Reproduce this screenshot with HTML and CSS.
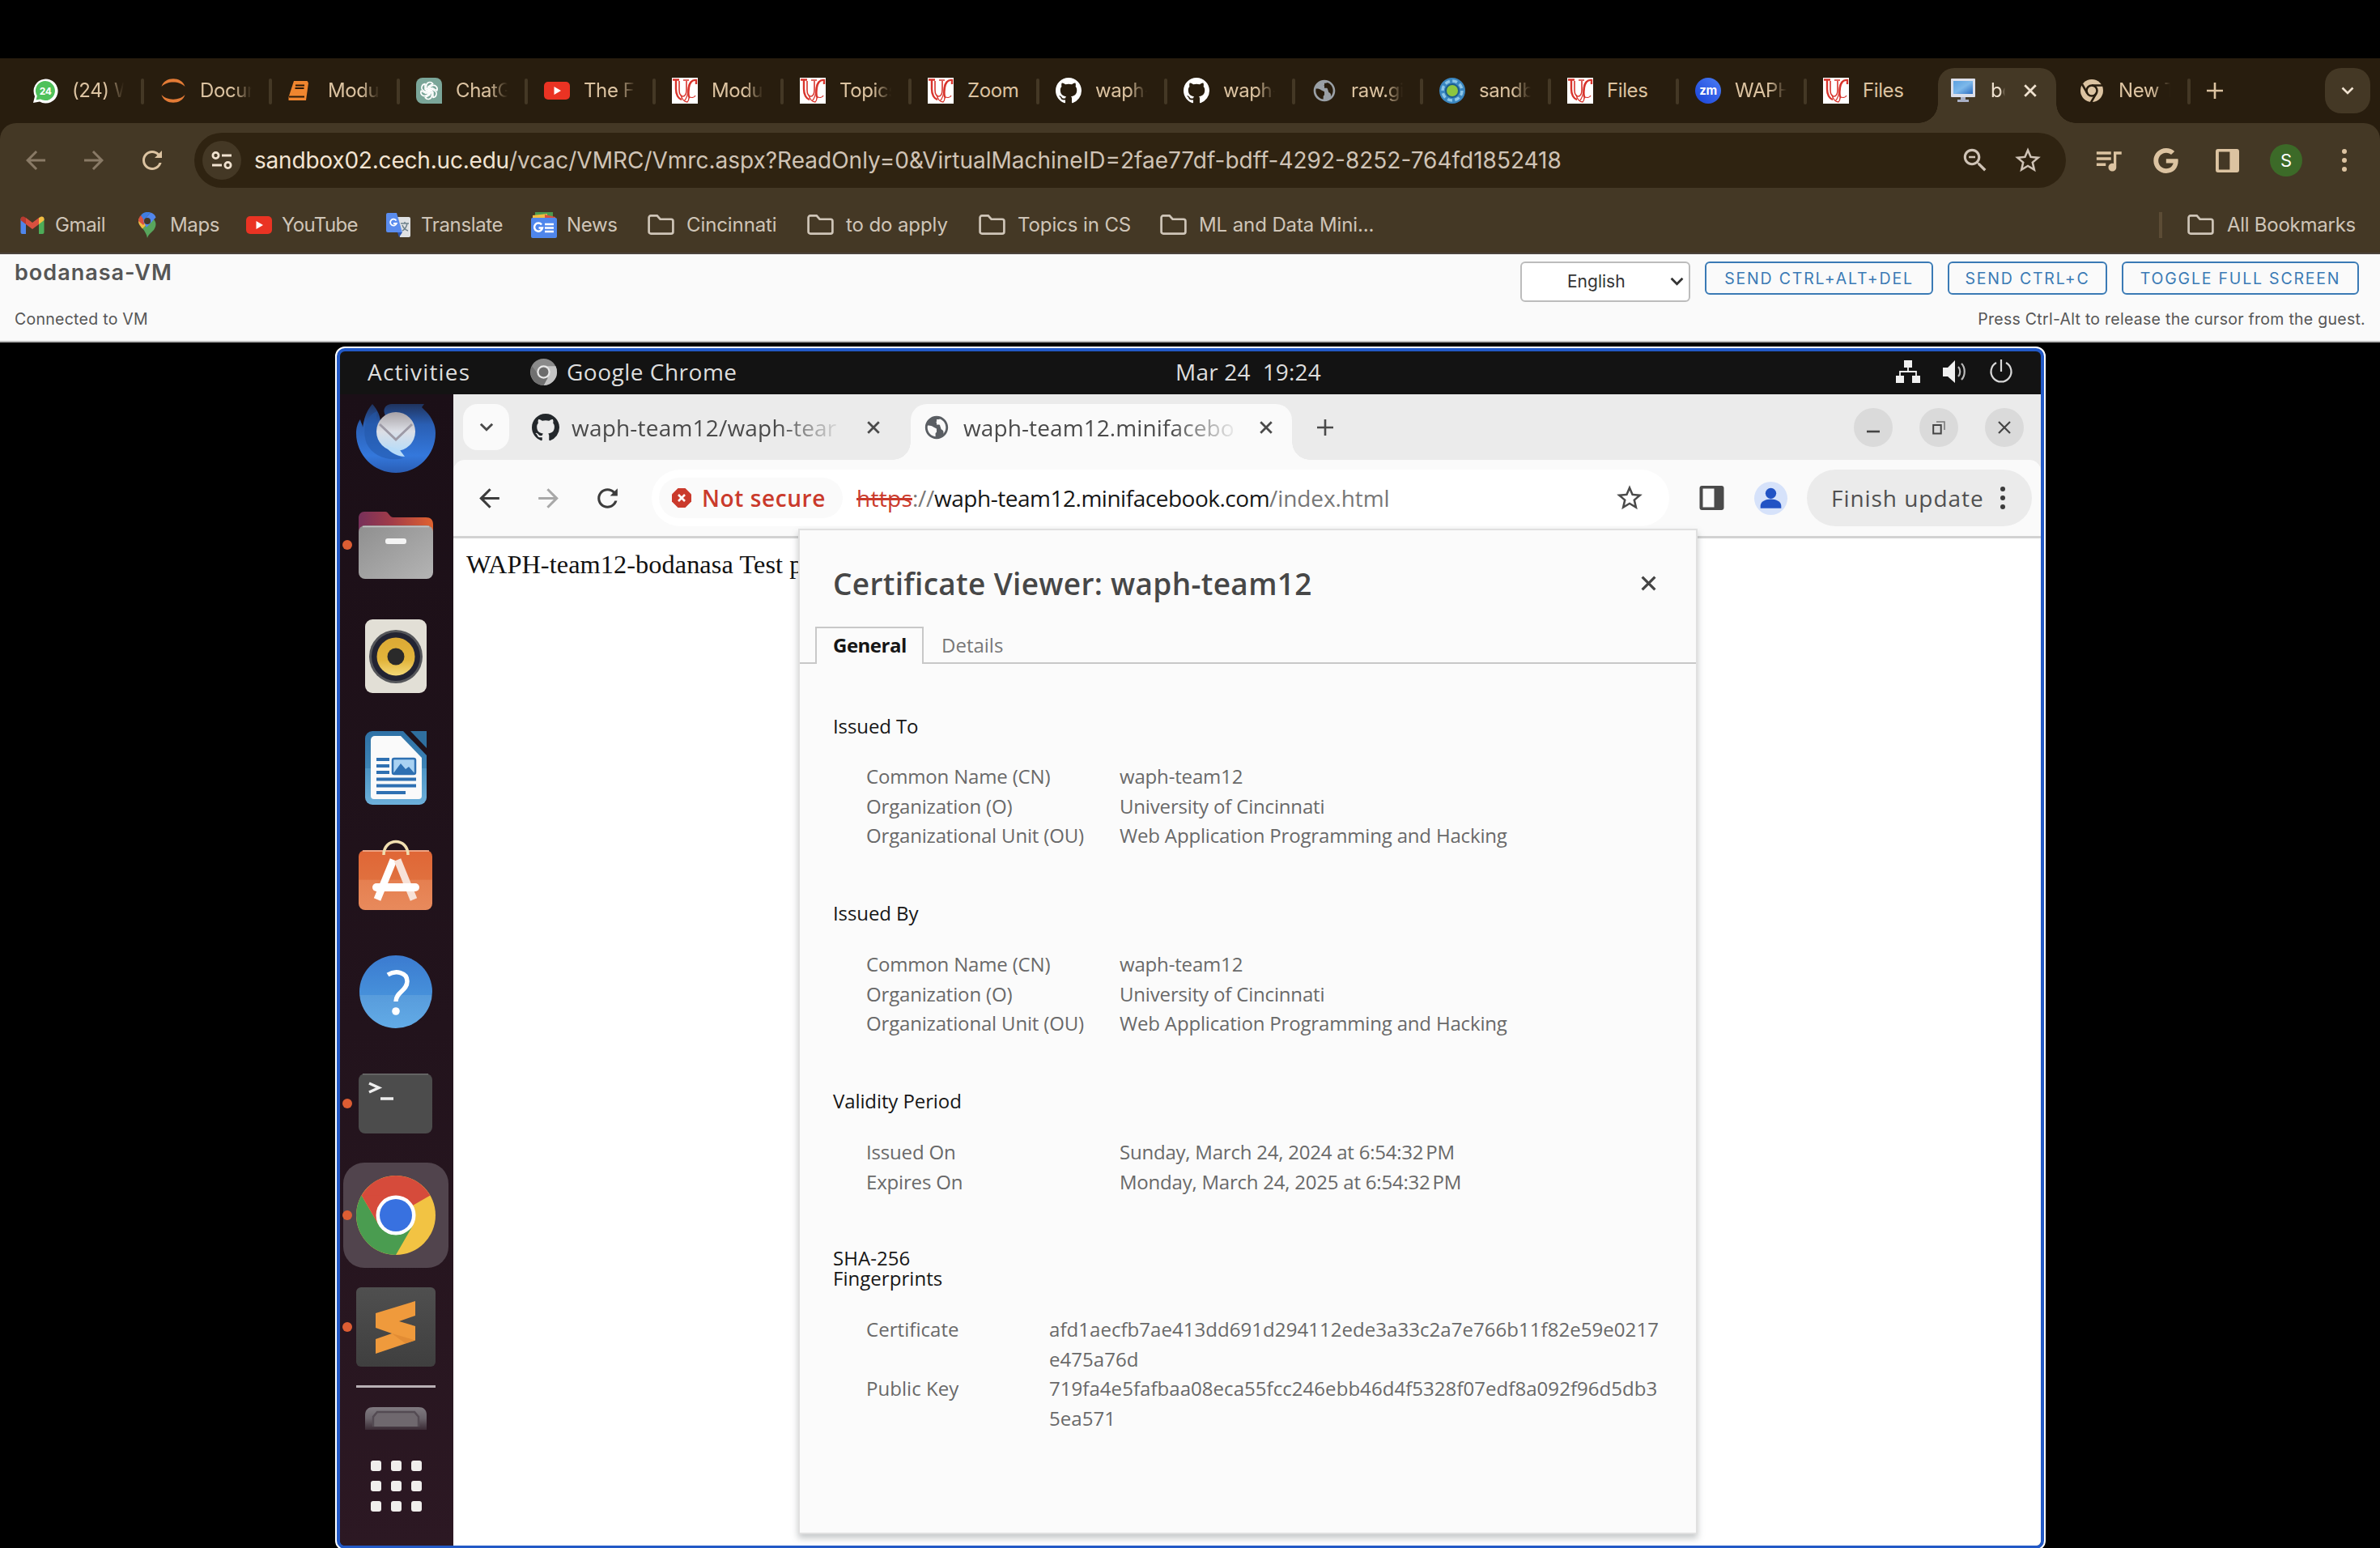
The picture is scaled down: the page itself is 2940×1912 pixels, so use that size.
FILE: index.html
```html
<!DOCTYPE html>
<html lang="en">
<head>
<meta charset="utf-8">
<title>bodanasa-VM</title>
<link rel="stylesheet" href="styles.css">
</head>
<body>
<svg class="defs" width="0" height="0">
  <defs>
    <linearGradient id="gZoom" x1="1" y1="0" x2="0" y2="1"><stop offset="0" stop-color="#4a7df5"/><stop offset="1" stop-color="#1a43d8"/></linearGradient>
    <linearGradient id="gScreen" x1="0" y1="0" x2="1" y2="1"><stop offset="0" stop-color="#5ca0e0"/><stop offset=".5" stop-color="#7db8ea"/><stop offset="1" stop-color="#2c6cc0"/></linearGradient>
    <linearGradient id="gBird" x1="0" y1="0" x2="0" y2="1"><stop offset="0" stop-color="#1f335e"/><stop offset=".3" stop-color="#2a5fb4"/><stop offset=".75" stop-color="#3478dc"/><stop offset="1" stop-color="#2a5db4"/></linearGradient>
    <linearGradient id="gMail" x1="0" y1="0" x2="0" y2="1"><stop offset="0" stop-color="#a8a2a6"/><stop offset=".5" stop-color="#dcdfe6"/><stop offset="1" stop-color="#b8dcf8"/></linearGradient>
    <linearGradient id="gFolder" x1="0" y1="0" x2="1" y2="0"><stop offset="0" stop-color="#77305a"/><stop offset=".45" stop-color="#a23c48"/><stop offset="1" stop-color="#e0622f"/></linearGradient>
    <linearGradient id="gGrey" x1="0" y1="0" x2="1" y2="1"><stop offset="0" stop-color="#8f8f8f"/><stop offset="1" stop-color="#b4b4b4"/></linearGradient>
    <linearGradient id="gSpk" x1="0" y1="0" x2="0" y2="1"><stop offset="0" stop-color="#dca934"/><stop offset=".6" stop-color="#e2b53c"/><stop offset="1" stop-color="#f4d977"/></linearGradient>
    <linearGradient id="gDoc" x1="0" y1="0" x2="0" y2="1"><stop offset="0" stop-color="#2e71a5"/><stop offset=".5" stop-color="#3d84b6"/><stop offset=".5" stop-color="#4c94c4"/><stop offset="1" stop-color="#6db0da"/></linearGradient>
    <linearGradient id="gBag" x1="0" y1="0" x2="0" y2="1"><stop offset="0" stop-color="#e06636"/><stop offset=".49" stop-color="#e0703e"/><stop offset=".5" stop-color="#e57f50"/><stop offset="1" stop-color="#e88a5c"/></linearGradient>
    <linearGradient id="gHelp" x1="0" y1="0" x2="0" y2="1"><stop offset="0" stop-color="#3b7bd0"/><stop offset=".54" stop-color="#4690da"/><stop offset=".55" stop-color="#589cdc"/><stop offset="1" stop-color="#62abe6"/></linearGradient>
    <linearGradient id="gTile" x1="0" y1="0" x2="0" y2="1"><stop offset="0" stop-color="#4f4f4f"/><stop offset="1" stop-color="#3f3f3f"/></linearGradient>
    <linearGradient id="gTrash" x1="0" y1="0" x2="0" y2="1"><stop offset="0" stop-color="#807a80"/><stop offset=".5" stop-color="#6a636a"/><stop offset="1" stop-color="#3a2a34"/></linearGradient>
  </defs>
  <symbol id="whatsapp" viewBox="0 0 32 32"><path d="M1 31l2-8A15 15 0 1 1 9 29.5z" fill="#fff"/><path d="M4.500 27.500l1.300-5A12 12 0 1 1 10 26.500z" fill="#4fc15b"/><text x="16" y="20.500" class="badge24">24</text></symbol>
  <symbol id="jupyter" viewBox="0 0 32 32"><path d="M1.500 11C5-2 27-2 30.500 11 24 3.500 8 3.500 1.500 11zM1.500 21C5 34 27 34 30.500 21 24 28.500 8 28.500 1.500 21z" fill="#e37b36"/></symbol>
  <symbol id="book" viewBox="0 0 32 32"><path d="M9 4h16.500L27 6.500 24 28H2.500V24z" fill="#f0862f"/><path d="M11 9.500h11M10.500 13h11M3 23.500h19" stroke="#2b1a0a" stroke-width="1.800"/></symbol>
  <symbol id="openai" viewBox="0 0 32 32"><path d="M8 0h16a8 8 0 0 1 8 8v24H8a8 8 0 0 1-8-8V8a8 8 0 0 1 8-8z" fill="#7ba699"/><g fill="none" stroke="#fff" stroke-width="1.600" stroke-linejoin="round"><path id="petal" d="M12.500 17.500V10.500c0-5 5.500-6.500 8.300-3l-5.800 3.400v8.200"/><use href="#petal" transform="rotate(60 16 16)"/><use href="#petal" transform="rotate(120 16 16)"/><use href="#petal" transform="rotate(180 16 16)"/><use href="#petal" transform="rotate(240 16 16)"/><use href="#petal" transform="rotate(300 16 16)"/></g></symbol>
  <symbol id="youtube" viewBox="0 0 32 32"><rect y="5" width="32" height="22" rx="5" fill="#ea3323"/><path d="M12.500 11l8.500 5-8.500 5z" fill="#fff"/></symbol>
  <symbol id="uc" viewBox="0 0 32 32"><path fill="#fff" d="M0 0h32v32H0z"/><g fill="none" stroke="#d8342c"><path stroke-width="2.400" d="M1 2.500h8M5 3v11c0 7 3 12 7 13"/><path stroke-width="1.600" d="M9 4v11c0 5 2 8 4.500 8s4.500-3 4.500-8V4M14 3h7"/><path stroke-width="2.400" d="M30 8V3c-6-1-8 4-9 9-1 7-1 11 1 13"/><path stroke-width="1.300" d="M25 4c-5 2-5 8-5 12s-2 10-5 13M11 21c1 5 4 9 8 9 1-1 2-3 2-5M22 24c3 1 6 0 7-2"/></g></symbol>
  <symbol id="github" viewBox="0 0 16 16"><path fill="currentColor" d="M8 0C3.580 0 0 3.580 0 8c0 3.540 2.290 6.530 5.470 7.590.4.070.550-.170.550-.380 0-.190-.010-.820-.010-1.490-2.010.370-2.530-.490-2.690-.940-.090-.230-.480-.940-.820-1.130-.280-.150-.680-.520-.010-.530.630-.010 1.080.580 1.230.820.720 1.210 1.870.870 2.330.660.070-.520.280-.870.510-1.070-1.780-.2-3.640-.890-3.640-3.950 0-.870.310-1.590.820-2.150-.080-.2-.360-1.020.080-2.120 0 0 .670-.210 2.200.820.640-.180 1.320-.270 2-.270.680 0 1.360.090 2 .270 1.530-1.040 2.200-.820 2.200-.820.440 1.100.160 1.920.080 2.120.510.560.820 1.270.820 2.150 0 3.070-1.870 3.750-3.650 3.950.290.250.540.730.540 1.480 0 1.070-.010 1.930-.010 2.200 0 .210.150.460.550.380A8.013 8.013 0 0 0 16 8c0-4.420-3.580-8-8-8z"/></symbol>
  <symbol id="globe" viewBox="0 0 24 24"><path fill="currentColor" d="M12 2C6.480 2 2 6.480 2 12s4.480 10 10 10 10-4.480 10-10S17.520 2 12 2zm-1 17.930c-3.950-.490-7-3.850-7-7.930 0-.620.080-1.210.210-1.790C6 10 8 10.500 9 11.500l3 1.500v3l-1 1v2.930zm6.900-2.540c.6-2-.4-3.390-1.900-3.890l-1-3c0-.550-.450-1-1-1h-2v-2h-1c.550 0 1-.450 1-1V5h1c1.100 0 2-.4 2-.410 2.930 1.190 5 4.060 5 7.410 0 2.080-.8 3.970-2.100 5.390z"/></symbol>
  <symbol id="sandbox" viewBox="0 0 32 32"><circle cx="16" cy="16" r="16" fill="#3a86c0"/><circle cx="16" cy="16" r="12" fill="none" stroke="#8cc6e8" stroke-width="3.500" stroke-dasharray="6 3.400"/><circle cx="16" cy="16" r="9" fill="#1c5c8c"/><circle cx="16" cy="16" r="7" fill="#8cc63f"/></symbol>
  <symbol id="zm" viewBox="0 0 32 32"><circle cx="16" cy="16" r="16" fill="url(#gZoom)"/><text x="16" y="21" class="zmtext">zm</text></symbol>
  <symbol id="monitor" viewBox="0 0 32 32"><rect x="1" y="1" width="30" height="23" rx="1" fill="#dcdfea"/><rect x="4" y="4" width="24" height="16" fill="url(#gScreen)"/><path d="M13 24h6v3h4v3H9v-3h4z" fill="#a9b0c6"/></symbol>
  <symbol id="chromemono" viewBox="0 0 32 32"><circle cx="16" cy="16" r="14" fill="currentColor"/><g fill="none" stroke="#281d0e" stroke-width="2.600"><circle cx="16" cy="16" r="6.500"/><path d="M16 9.500h13M21.600 19.200L15 30.500M10.400 19.200L4 8"/></g></symbol>
  <symbol id="close" viewBox="0 0 16 16"><path d="M2 2l12 12M14 2L2 14" stroke="currentColor" stroke-width="2.500" fill="none"/></symbol>
  <symbol id="plus" viewBox="0 0 20 20"><path d="M10 0v20M0 10h20" stroke="currentColor" stroke-width="2.600"/></symbol>
  <symbol id="chevron" viewBox="0 0 16 10"><path d="M1.500 1.500L8 8l6.500-6.500" stroke="currentColor" stroke-width="2.600" fill="none"/></symbol>
  <symbol id="back" viewBox="0 0 24 24"><path fill="currentColor" d="M20 11H7.830l5.590-5.590L12 4l-8 8 8 8 1.410-1.410L7.830 13H20v-2z"/></symbol>
  <symbol id="forward" viewBox="0 0 24 24"><path fill="currentColor" d="M12 4l-1.410 1.410L16.170 11H4v2h12.170l-5.580 5.590L12 20l8-8z"/></symbol>
  <symbol id="reload" viewBox="0 0 24 24"><path fill="currentColor" d="M17.650 6.350C16.200 4.900 14.210 4 12 4c-4.420 0-7.990 3.580-7.990 8s3.570 8 7.990 8c3.730 0 6.840-2.550 7.730-6h-2.080c-.820 2.330-3.040 4-5.650 4-3.310 0-6-2.690-6-6s2.690-6 6-6c1.660 0 3.140.690 4.220 1.780L14 10h6V4l-2.350 2.350z"/></symbol>
  <symbol id="tune" viewBox="0 0 26 22"><g fill="none" stroke="currentColor" stroke-width="2.800"><circle cx="5.500" cy="5" r="3.600"/><path d="M13 5h12M1 17h12"/><circle cx="20.500" cy="17" r="3.600"/></g></symbol>
  <symbol id="zoomout" viewBox="0 0 24 24"><path fill="currentColor" d="M15.500 14h-.790l-.280-.270C15.410 12.590 16 11.110 16 9.500 16 5.910 13.090 3 9.500 3S3 5.910 3 9.500 5.910 16 9.500 16c1.610 0 3.090-.590 4.230-1.570l.270.280v.790l5 4.990L20.490 19l-4.990-5zm-6 0C7.010 14 5 11.990 5 9.500S7.010 5 9.500 5 14 7.010 14 9.500 11.990 14 9.500 14zM7 8.700h5v1.600H7z"/></symbol>
  <symbol id="star" viewBox="0 0 24 24"><path fill="currentColor" d="M22 9.240l-7.190-.620L12 2 9.190 8.630 2 9.240l5.460 4.730L5.820 21 12 17.270 18.180 21l-1.630-7.030L22 9.240zM12 15.400l-3.760 2.270 1-4.280-3.320-2.880 4.380-.380L12 6.100l1.710 4.040 4.380.380-3.320 2.880 1 4.280L12 15.400z"/></symbol>
  <symbol id="queue" viewBox="0 0 24 24"><path fill="currentColor" d="M14 5H3v2.200h11V5zm0 4.400H3v2.200h11V9.400zM3 16h7v-2.200H3V16zM16 5v9.180c-.310-.110-.650-.180-1-.180-1.660 0-3 1.340-3 3s1.340 3 3 3 3-1.340 3-3V7.200h4V5h-6z"/></symbol>
  <symbol id="google" viewBox="0 0 24 24"><path fill="currentColor" d="M12.240 10.285V14.400h6.806c-.275 1.765-2.056 5.174-6.806 5.174-4.095 0-7.439-3.389-7.439-7.574s3.345-7.574 7.439-7.574c2.330 0 3.891.989 4.785 1.849l3.254-3.138C18.189 1.186 15.479 0 12.240 0c-6.635 0-12 5.365-12 12s5.365 12 12 12c6.926 0 11.520-4.869 11.520-11.726 0-.788-.085-1.390-.189-1.989H12.240z"/></symbol>
  <symbol id="panel" viewBox="0 0 30 30"><path fill="currentColor" fill-rule="evenodd" d="M3 0h24a3 3 0 0 1 3 3v24a3 3 0 0 1-3 3H3a3 3 0 0 1-3-3V3a3 3 0 0 1 3-3zm1 3.500v23h14v-23z"/></symbol>
  <symbol id="dots" viewBox="0 0 6 30"><g fill="currentColor"><circle cx="3" cy="4" r="3"/><circle cx="3" cy="15" r="3"/><circle cx="3" cy="26" r="3"/></g></symbol>
  <symbol id="folder" viewBox="0 0 34 26"><path d="M4 1.500h8l4 4.500h14a2.500 2.500 0 0 1 2.500 2.500V22a2.500 2.500 0 0 1-2.500 2.500H4A2.500 2.500 0 0 1 1.500 22V4A2.500 2.500 0 0 1 4 1.500z" fill="none" stroke="currentColor" stroke-width="2.800"/></symbol>
  <symbol id="gmail" viewBox="0 0 32 32"><path d="M1.500 8v17a2 2 0 0 0 2 2H8V14z" fill="#4f86ec"/><path d="M30.500 8v17a2 2 0 0 1-2 2H24V14z" fill="#4dac58"/><path d="M8 7v8l8 6 8-6V7l-8 6z" fill="#d9503f"/><path d="M1.500 8.500C1.500 5 5 4.500 8 7v8l-6.500-5z" fill="#b83a30"/><path d="M30.500 8.500C30.500 5 27 4.500 24 7v8l6.500-5z" fill="#f2bd42"/></symbol>
  <symbol id="maps" viewBox="0 0 32 32"><path d="M16 32c-1-5-3-8-6-12l12-13c5 4 6 9 2 15-4 4-7 6-8 10z" fill="#58a55c"/><path d="M5.500 8C4 13 6 16 10 20.500L20 10z" fill="#f2bd42"/><path d="M8 4C6 6 5 8 5 11l6 5 5-6z" fill="#d85140"/><path d="M8 4c3-4 8-5 12-3.500L12 10z" fill="#3f7de0"/><path d="M20 .5c3.500 1 5.500 3 6.500 6L15 19l-4-8z" fill="#5186ec"/><circle cx="16" cy="11" r="4" fill="#443825"/></symbol>
  <symbol id="translate" viewBox="0 0 32 32"><path d="M13 6h16a2 2 0 0 1 2 2v21a2 2 0 0 1-2 2H18z" fill="#dfe1e3"/><path d="M15 25h6l-4 6z" fill="#3057b0"/><path d="M3 1h11l7 24H3a2 2 0 0 1-2-2V3a2 2 0 0 1 2-2z" fill="#5a8cee"/><path d="M13.500 10.500a4 4 0 1 0 .4 3.500H10" fill="none" stroke="#fff" stroke-width="1.800"/><path d="M19 14h10M24 12v2M27 14c-1 5-4 8-6 9M21 16c1 3 4 6 7 7" fill="none" stroke="#70828c" stroke-width="1.500"/></symbol>
  <symbol id="news" viewBox="0 0 32 32"><path d="M5 0h22v8H5z" fill="#4c9a4e"/><path d="M2 4l18-2v8H2z" fill="#f2bd42"/><path d="M17 3l13 3v5H17z" fill="#d85140"/><rect y="7" width="32" height="25" rx="2" fill="#4f86ec"/><path d="M13 15.500a5 5 0 1 0 1 4H9.500M17 15h11M17 19.500h11M17 24h11" fill="none" stroke="#fff" stroke-width="2.500"/></symbol>
</svg>

<header class="browser">
  <div class="tabstrip">
    <div class="tab"><svg><use href="#whatsapp"/></svg><span>(24) W</span></div>
    <div class="tab"><svg><use href="#jupyter"/></svg><span>Docum</span></div>
    <div class="tab"><svg class="shift"><use href="#book"/></svg><span>Modu</span></div>
    <div class="tab"><svg><use href="#openai"/></svg><span>ChatG</span></div>
    <div class="tab"><svg><use href="#youtube"/></svg><span>The F</span></div>
    <div class="tab"><svg><use href="#uc"/></svg><span>Modu</span></div>
    <div class="tab"><svg><use href="#uc"/></svg><span>Topics</span></div>
    <div class="tab full"><svg><use href="#uc"/></svg><span>Zoom</span></div>
    <div class="tab white"><svg><use href="#github"/></svg><span>waph-</span></div>
    <div class="tab white"><svg><use href="#github"/></svg><span>waph-</span></div>
    <div class="tab grey"><svg><use href="#globe"/></svg><span>raw.gi</span></div>
    <div class="tab"><svg><use href="#sandbox"/></svg><span>sandb</span></div>
    <div class="tab full"><svg><use href="#uc"/></svg><span>Files</span></div>
    <div class="tab"><svg><use href="#zm"/></svg><span>WAPH</span></div>
    <div class="tab full last"><svg><use href="#uc"/></svg><span>Files</span></div>
    <div class="tab active"><svg><use href="#monitor"/></svg><span>bo</span><svg class="x"><use href="#close"/></svg></div>
    <div class="tab"><svg><use href="#chromemono"/></svg><span>New T</span></div>
    <svg class="newtab"><use href="#plus"/></svg>
    <div class="tabsearch"><svg><use href="#chevron"/></svg></div>
  </div>
  <div class="toolbar">
    <div class="navrow">
      <svg class="nav dim"><use href="#back"/></svg>
      <svg class="nav dim"><use href="#forward"/></svg>
      <svg class="nav"><use href="#reload"/></svg>
      <div class="omnibox">
        <div class="site"><svg><use href="#tune"/></svg></div>
        <div class="url"><b>sandbox02.cech.uc.edu</b>/vcac/VMRC/Vmrc.aspx?ReadOnly=0&amp;VirtualMachineID=2fae77df-bdff-4292-8252-764fd1852418</div>
        <svg class="mag"><use href="#zoomout"/></svg>
        <svg class="fav"><use href="#star"/></svg>
      </div>
      <div class="actions">
        <svg class="queue"><use href="#queue"/></svg>
        <svg class="goog"><use href="#google"/></svg>
        <svg class="side"><use href="#panel"/></svg>
        <div class="avatar">S</div>
        <svg class="more"><use href="#dots"/></svg>
      </div>
    </div>
    <div class="bookmarks">
      <div class="bm"><svg><use href="#gmail"/></svg>Gmail</div>
      <div class="bm"><svg><use href="#maps"/></svg>Maps</div>
      <div class="bm yt"><svg><use href="#youtube"/></svg>YouTube</div>
      <div class="bm"><svg><use href="#translate"/></svg>Translate</div>
      <div class="bm"><svg><use href="#news"/></svg>News</div>
      <div class="bm fold"><svg><use href="#folder"/></svg>Cincinnati</div>
      <div class="bm fold"><svg><use href="#folder"/></svg>to do apply</div>
      <div class="bm fold"><svg><use href="#folder"/></svg>Topics in CS</div>
      <div class="bm fold"><svg><use href="#folder"/></svg>ML and Data Mini...</div>
      <div class="bm fold all"><svg><use href="#folder"/></svg>All Bookmarks</div>
    </div>
  </div>
</header>

<section class="vmbar">
  <div class="vmrow">
    <h1>bodanasa-VM</h1>
    <div class="controls">
      <div class="select"><span>English</span><svg><use href="#chevron"/></svg></div>
      <div class="btn b1">SEND CTRL+ALT+DEL</div>
      <div class="btn b2">SEND CTRL+C</div>
      <div class="btn b3">TOGGLE FULL SCREEN</div>
    </div>
  </div>
  <div class="vmrow status"><span>Connected to VM</span><span>Press Ctrl-Alt to release the cursor from the guest.</span></div>
</section>

<main class="stage">
  <div class="frame"><div class="guest">
    <div class="topbar">
      <span class="activities">Activities</span>
      <svg class="appicon" viewBox="0 0 32 32"><circle cx="16" cy="16" r="16" fill="#8a8a8a"/><path d="M16 9h14.500A16 16 0 0 1 16 32l6-12z" fill="#c4c4c4"/><path d="M2 9a16 16 0 0 0 14 23l5-9-11-4z" fill="#707070"/><circle cx="16" cy="16" r="8" fill="#e8e8e8"/><circle cx="16" cy="16" r="5.800" fill="#6c6c6c"/></svg>
      <span class="appname">Google Chrome</span>
      <span class="clock">Mar 24&nbsp; 19:24</span>
      <div class="tray">
        <svg width="32" height="30" viewBox="0 0 32 30"><path d="M11 1h10v9H11zM1 20h10v9H1zM21 20h10v9H21z" fill="#f0f0f0"/><path d="M16 10v5M6 20v-5h20v5" fill="none" stroke="#f0f0f0" stroke-width="1.800"/></svg>
        <svg width="32" height="30" viewBox="0 0 32 30"><path d="M1 10h6l9-9v28l-9-8H1z" fill="#f0f0f0"/><path d="M20 9c3 3 3 9 0 12M24 5c5 5 5 15 0 20" fill="none" stroke="#bbb" stroke-width="2.200"/></svg>
        <svg width="30" height="30" viewBox="0 0 30 30"><path d="M9 4a12.500 12.500 0 1 0 12 0M15 0v15" fill="none" stroke="#d8d8d8" stroke-width="2.200"/></svg>
      </div>
    </div>
    <div class="desktop">
      <nav class="dock">
        <div class="slot"><svg viewBox="0 0 98 98"><path d="M5 32C6 37 8 38 8 42 10 28 14 20 20 13c6 7 9 13 10 21l6-7c-4-7 0-14 8-14h40l-3 4 5 5c8 8 12 18 12 27a49 49 0 0 1-98 0C0 42 2 36 5 32z" fill="url(#gBird)"/><path d="M13 62C6 42 14 26 26 22c-4 20 2 46 32 58-18 4-37-2-45-18z" fill="#2358aa" opacity=".55"/><circle cx="49" cy="47" r="24" fill="url(#gMail)"/><path d="M29 38l20 19 20-19" fill="none" stroke="#9d9aa6" stroke-width="3"/><path d="M36 64c3 7 12 13 24 14l-6-8z" fill="#b8dcf8"/></svg></div>
        <div class="slot run"><svg viewBox="0 0 98 98"><path d="M10 8h26c4 0 5 7 10 7h40c6 0 9 3 9 9v20H3V16c0-5 3-8 7-8z" fill="url(#gFolder)"/><rect x="3" y="25" width="92" height="66" rx="8" fill="url(#gGrey)"/><path d="M8 26.500h82" stroke="#c4c4c4" stroke-width="1.500"/><rect x="36" y="41" width="26" height="7" rx="3" fill="#f4f4f4"/></svg></div>
        <div class="slot"><svg viewBox="0 0 98 98"><rect x="11" y="3" width="76" height="91" rx="9" fill="#e2dfd6"/><circle cx="49" cy="49" r="33" fill="#55565a"/><circle cx="49" cy="49" r="30" fill="#232432"/><circle cx="49" cy="49" r="23.500" fill="url(#gSpk)"/><circle cx="49" cy="49" r="10.500" fill="#2a2a2a"/></svg></div>
        <div class="slot"><svg viewBox="0 0 98 98"><path d="M20 3h38l29 30v52a9 9 0 0 1-9 9H20a9 9 0 0 1-9-9V12a9 9 0 0 1 9-9z" fill="url(#gDoc)"/><path d="M67 3h20v21z" fill="#2f6f9f"/><path d="M23 9h32l26 27v47a4 4 0 0 1-4 4H22a4 4 0 0 1-4-4V14a5 5 0 0 1 5-5z" fill="#fafafa"/><path d="M25 38h16M25 46h16M25 54h16M25 62.500h49M25 70.500h49M25 79h36" stroke="#2e70b2" stroke-width="4"/><rect x="45" y="37" width="28" height="19" rx="2" fill="#a9d2f2" stroke="#2e70b2" stroke-width="2.500"/><path d="M46 55l9-12 6 7 4-3 7 8z" fill="#2e70b2"/></svg></div>
        <div class="slot"><svg viewBox="0 0 98 98"><rect x="3" y="12" width="91" height="74" rx="8" fill="url(#gBag)"/><path d="M8 13h82" stroke="#f3b79c" stroke-width="1.500"/><path d="M34 18c0-22 30-22 30 0" fill="none" stroke="#f0deb0" stroke-width="3.500"/><path d="M26 73l20-49" stroke="#fff" stroke-width="9" fill="none"/><path d="M71 73L51 24" stroke="#f7e2d8" stroke-width="9" fill="none"/><rect x="20" y="53" width="58" height="10" rx="5" fill="#fff"/></svg></div>
        <div class="slot"><svg viewBox="0 0 98 98"><circle cx="49" cy="49" r="45" fill="url(#gHelp)"/><path d="M39 28c10-6 24-3 24 8 0 12-14 13-14 25" fill="none" stroke="#fff" stroke-width="5.500"/><circle cx="49" cy="73" r="4.800" fill="#fff"/></svg></div>
        <div class="slot run"><svg viewBox="0 0 98 98"><rect x="3" y="12" width="91" height="74" rx="8" fill="#4c4c4c"/><path d="M8 12.800h81" stroke="#6e6e6e" stroke-width="1.500"/><path d="M16 24l12 5.500L16 35M30 43h16" fill="none" stroke="#eee" stroke-width="3.500"/></svg></div>
        <div class="slot run sel"><svg viewBox="0 0 98 98"><circle cx="49" cy="49" r="49" fill="#f2c343"/><path d="M49 49h0L6.600 24.500A49 49 0 0 1 91.400 24.500z" fill="#d64b3b"/><path d="M6.600 24.500A49 49 0 0 0 49 98l21.200-36.800L49 49 28 61.200z" fill="#4a9c50"/><path d="M6.600 24.500L28 61.200 49 49 60 24.500z" fill="#d64b3b"/><circle cx="49" cy="49" r="24.500" fill="#fff"/><circle cx="49" cy="49" r="20" fill="#3871e0"/></svg></div>
        <div class="slot run"><svg viewBox="0 0 98 98"><rect width="98" height="98" rx="6" fill="url(#gTile)"/><path d="M73 17v18l-20 7 20 6v17.500L24 82V64l20-7-20-7V32z" fill="#ef9a3c"/><path d="M44 57l29 8.500-12 4z" fill="#d9842f" opacity=".6"/></svg></div>
        <div class="rule"></div>
        <svg class="trash" viewBox="0 0 76 28"><path d="M0 28V10C0 3 4 0 10 0h56c6 0 10 3 10 10v18z" fill="url(#gTrash)"/><path d="M10 24V12l5-6h46l5 6v12" fill="#6f686e" stroke="#544b53" stroke-width="2.500"/></svg>
        <div class="apps"><i></i><i></i><i></i><i></i><i></i><i></i><i></i><i></i><i></i></div>
      </nav>
      <div class="chrome">
        <div class="ctabs">
          <div class="cdrop"><svg><use href="#chevron"/></svg></div>
          <div class="ctab one"><svg class="ico dark"><use href="#github"/></svg><span>waph-team12/waph-tear</span><svg class="cx"><use href="#close"/></svg></div>
          <div class="ctab two"><svg class="ico glb"><use href="#globe"/></svg><span>waph-team12.minifacebo</span><svg class="cx"><use href="#close"/></svg></div>
          <svg class="cplus"><use href="#plus"/></svg>
          <div class="wins">
            <div><svg viewBox="0 0 16 16"><path d="M0 13h16" stroke="#444" stroke-width="2.600"/></svg></div>
            <div><svg viewBox="0 0 16 16"><path d="M1.200 5h9.500v10.500H1.200z" fill="none" stroke="#444" stroke-width="2"/><path d="M5 1h10v10" fill="none" stroke="#777" stroke-width="1.500"/></svg></div>
            <div><svg viewBox="0 0 16 16"><path d="M1 1l14 14M15 1L1 15" stroke="#444" stroke-width="2.200"/></svg></div>
          </div>
        </div>
        <div class="cbar">
          <svg class="cnav"><use href="#back"/></svg>
          <svg class="cnav off"><use href="#forward"/></svg>
          <svg class="cnav"><use href="#reload"/></svg>
          <div class="cbox">
            <div class="chip"><svg viewBox="0 0 24 24"><path d="M7.500 0h9L24 7.500v9L16.500 24h-9L0 16.500v-9z" fill="#ca3a2c"/><path d="M8 8l8 8M16 8l-8 8" stroke="#fff" stroke-width="2.600"/></svg>Not secure</div>
            <div class="curl"><s>https</s><em>://</em><b>waph-team12.minifacebook.com</b><em class="path">/index.html</em></div>
            <svg class="cstar"><use href="#star"/></svg>
          </div>
          <svg class="cpanel"><use href="#panel"/></svg>
          <div class="cuser"><svg viewBox="0 0 40 40"><circle cx="20" cy="14" r="6.500" fill="#2253c4"/><path d="M7.500 32v-3c0-5 6-8 12.500-8s12.500 3 12.500 8v3z" fill="#2253c4"/></svg></div>
          <div class="update">Finish update<svg><use href="#dots"/></svg></div>
        </div>
        <div class="page">WAPH-team12-bodanasa Test p</div>
        <div class="dialog">
          <div class="dhead"><h2>Certificate Viewer: waph-team12</h2><svg><use href="#close"/></svg></div>
          <div class="dtabs"><div class="on">General</div><div>Details</div></div>
          <div class="dbody">
            <h3>Issued To</h3>
            <dl><dt>Common Name (CN)</dt><dd>waph-team12</dd><dt>Organization (O)</dt><dd>University of Cincinnati</dd><dt>Organizational Unit (OU)</dt><dd>Web Application Programming and Hacking</dd></dl>
            <h3>Issued By</h3>
            <dl><dt>Common Name (CN)</dt><dd>waph-team12</dd><dt>Organization (O)</dt><dd>University of Cincinnati</dd><dt>Organizational Unit (OU)</dt><dd>Web Application Programming and Hacking</dd></dl>
            <h3>Validity Period</h3>
            <dl><dt>Issued On</dt><dd class="date">Sunday, March 24, 2024 at 6:54:32&#8239;PM</dd><dt>Expires On</dt><dd class="date">Monday, March 24, 2025 at 6:54:32&#8239;PM</dd></dl>
            <h3 class="sha">SHA-256<br>Fingerprints</h3>
            <dl class="hash"><dt>Certificate</dt><dd>afd1aecfb7ae413dd691d294112ede3a33c2a7e766b11f82e59e0217<br>e475a76d</dd><dt>Public Key</dt><dd>719fa4e5fafbaa08eca55fcc246ebb46d4f5328f07edf8a092f96d5db3<br>5ea571</dd></dl>
          </div>
        </div>
      </div>
    </div>
  </div></div>
</main>
</body>
</html>
```
FILE: styles.css
```css
* { box-sizing: border-box; }
body {
  margin: 0;
  width: 2940px;
  height: 1912px;
  overflow: hidden;
  background: #000;
  font-family: Inter, "Liberation Sans", sans-serif;
  display: flex;
  flex-direction: column;
}
svg { display: block; flex: none; overflow: visible; }
.defs { position: absolute; }
.badge24 { font: 700 12px Inter, sans-serif; fill: #fff; text-anchor: middle; }
.zmtext { font: 700 15px Inter, sans-serif; fill: #fff; text-anchor: middle; }

/* Host browser */
.browser { margin-top: 72px; background: #281d0e; color: #dcc3a1; flex: none; }
.tabstrip { display: flex; height: 80px; padding-left: 18px; align-items: center; font-size: 24px; letter-spacing: -.4px; }
.tab { width: 158px; height: 80px; padding: 0 0 1px 22px; display: flex; align-items: center; position: relative; flex: none; }
.tab > svg { width: 32px; height: 32px; }
.tab .shift { margin: 0 2px 0 -2px; }
.tab span {
  margin-left: 17px;
  width: 64px;
  overflow: hidden;
  white-space: nowrap;
  -webkit-mask-image: linear-gradient(90deg, #000 65%, transparent);
  mask-image: linear-gradient(90deg, #000 65%, transparent);
}
.tab.full span { -webkit-mask-image: none; mask-image: none; }
.tab::after { content: ""; width: 4px; height: 32px; border-radius: 2px; background: #443825; position: absolute; right: -2px; top: 25px; }
.tab.last::after { display: none; }
.tab.white svg { color: #fff; }
.tab.grey svg { color: #9aa0a6; }
.tab.active { height: 68px; width: 146px; margin: 12px 6px 0; padding: 0 0 13px 15px; background: #443825; border-radius: 20px 20px 0 0; color: #f0e2d0; }
.tab.active span { width: 18px; margin-left: 18px; }
.tab.active .x { width: 18px; height: 18px; margin-left: 22px; }
.tab.active::before, .tab.active::after { content: ""; position: absolute; width: 24px; height: 24px; bottom: 0; top: auto; border-radius: 0; }
.tab.active::before { left: -24px; right: auto; background: radial-gradient(circle at 0 0, transparent 23.5px, #443825 24px); }
.tab.active::after { right: -24px; background: radial-gradient(circle at 100% 0, transparent 23.5px, #443825 24px); }
.newtab { width: 20px; height: 20px; margin-left: 22px; }
.tabsearch { width: 56px; height: 56px; border-radius: 20px; background: #443825; margin: 0 12px 0 auto; display: flex; align-items: center; justify-content: center; color: #f0e2d0; }
.tabsearch svg { width: 16px; height: 10px; }

.toolbar { background: #443825; border-radius: 20px 20px 0 0; height: 162px; border-bottom: 2px solid #4b433b; }
.navrow { display: flex; align-items: center; height: 92px; }
.nav { width: 36px; height: 36px; margin-left: 26px; margin-right: 10px; }
.nav.dim { color: #897a66; }
.omnibox { margin-left: 24px; width: 2312px; height: 68px; border-radius: 34px; background: #2f2311; display: flex; align-items: center; padding-left: 10px; color: #cfc3b6; }
.site { width: 48px; height: 48px; border-radius: 50%; background: #443825; display: flex; align-items: center; justify-content: center; color: #f0e2d0; }
.site svg { width: 26px; height: 22px; }
.url { font-size: 28px; margin-left: 16px; width: 2107px; white-space: nowrap; }
.url b { font-weight: 400; color: #f2e4d3; letter-spacing: -.2px; }
.mag { width: 38px; height: 38px; }
.fav { width: 38px; height: 38px; margin-left: 27px; }
.actions { display: flex; align-items: center; margin-left: 33px; }
.queue { width: 39px; height: 39px; }
.goog { width: 31px; height: 31px; margin-left: 36px; }
.side { width: 29px; height: 29px; margin-left: 46px; }
.avatar { width: 40px; height: 40px; border-radius: 50%; background: #3c6a28; color: #fff; font-size: 22px; line-height: 40px; text-align: center; margin-left: 38px; }
.more { width: 6px; height: 30px; margin-left: 49px; }
.bookmarks {
  display: grid;
  grid-template-columns: 142px 138px 172px 180px 144px 197px 212px 224px 1fr auto;
  align-items: center;
  height: 67px;
  padding: 0 30px 0 24px;
  font-size: 24px;
  letter-spacing: -.35px;
  color: #cfc5b8;
  white-space: nowrap;
}
.bm { display: flex; align-items: center; gap: 12px; }
.bm svg { width: 32px; height: 32px; }
.bm.yt { letter-spacing: -.65px; }
.bm.fold { gap: 15px; letter-spacing: -.1px; }
.bm.fold svg { width: 33px; height: 25px; }
.bm.all { border-left: 4px solid #5c4c35; height: 32px; padding-left: 31px; gap: 16px; letter-spacing: -.25px; }

/* Console header */
.vmbar { background: #fafafa; height: 109px; flex: none; border-bottom: 2px solid #b9b9b9; color: #565656; padding: 9px 18px 0; }
.vmrow { display: flex; justify-content: space-between; align-items: flex-start; height: 58px; }
h1 { margin: 0; font-size: 27px; font-weight: 600; line-height: 27px; letter-spacing: 1px; }
.controls { display: flex; align-items: flex-start; margin-right: 8px; }
.select { width: 210px; height: 50px; border: 2px solid #bcbcbc; border-radius: 6px; background: #fff; color: #333; font-size: 21px; display: flex; align-items: center; justify-content: space-between; padding: 0 6px 2px 56px; margin-right: 18px; }
.select svg { width: 17px; height: 11px; }
.btn { height: 41px; border: 2px solid #3a7ab5; border-radius: 6px; color: #3a7ab5; font-size: 19.5px; letter-spacing: 1.8px; line-height: 39px; text-align: center; white-space: nowrap; }
.b1 { width: 282px; }
.b2 { width: 197px; margin: 0 18px; }
.b3 { width: 293px; }
.status { font-size: 19.5px; letter-spacing: .27px; line-height: 24px; padding-top: 1px; }

/* Guest display */
.stage { flex: 1; padding: 5px 0 0 414px; }
.frame { width: 2113px; height: 1487px; border: 2px solid #fff; border-radius: 12px; background: #2259c6; padding: 4px; }
.guest { height: 1475px; width: 2101px; border-radius: 6px; overflow: hidden; background: #131313; font-family: "Open Sans", "Noto Sans", sans-serif; display: flex; flex-direction: column; }
.topbar { height: 53px; flex: none; display: flex; align-items: center; padding: 0 34px 3px 34px; color: #dedede; font-size: 28px; font-weight: 500; white-space: nowrap; }
.activities { width: 201px; letter-spacing: 1.2px; }
.appicon { width: 33px; height: 33px; }
.appname { margin-left: 12px; width: 752px; letter-spacing: .5px; }
.clock { letter-spacing: .2px; }
.tray { margin-left: auto; display: flex; gap: 26px; }
.desktop { flex: 1; display: flex; min-height: 0; }
.dock { width: 140px; flex: none; background: linear-gradient(#1b0f17, #22131c 55%, #2c1823); display: flex; flex-direction: column; align-items: center; padding-right: 2px; }
.slot { height: 138px; width: 138px; flex: none; display: flex; align-items: center; justify-content: center; position: relative; }
.slot:first-child { height: 117px; padding-bottom: 21px; }
.slot svg { width: 98px; height: 98px; position: relative; }
.slot.run::before { content: ""; position: absolute; left: 3px; top: 63px; width: 12px; height: 12px; border-radius: 50%; background: #dd5d33; z-index: 1; }
.slot.sel::after { content: ""; position: absolute; left: 4px; top: 4px; width: 130px; height: 130px; border-radius: 26px; background: #51444d; }
.slot.sel svg { z-index: 1; }
.rule { width: 98px; height: 3px; background: #b8b0b4; margin-top: 3px; flex: none; }
.trash { width: 76px; height: 28px; margin-top: 24px; }
.apps { display: grid; grid-template-columns: repeat(3, 13px); gap: 12px; margin-top: 38px; }
.apps i { width: 13px; height: 13px; border-radius: 3px; background: #f0eeec; }

.chrome { flex: 1; background: #ebebeb; position: relative; display: flex; flex-direction: column; color: #4a4a4a; }
.ctabs { display: flex; height: 81px; flex: none; align-items: center; font-size: 28px; font-weight: 500; }
.cdrop { width: 57px; height: 57px; border-radius: 18px; background: #fafafa; margin-left: 12px; display: flex; align-items: center; justify-content: center; }
.cdrop svg { width: 18px; height: 11px; }
.ctab { display: flex; align-items: center; position: relative; white-space: nowrap; }
.ctab span { overflow: hidden; -webkit-mask-image: linear-gradient(90deg, #000 75%, transparent); mask-image: linear-gradient(90deg, #000 75%, transparent); }
.ctab .ico { width: 34px; height: 34px; }
.ctab .dark { color: #23272b; }
.ctab .glb { color: #5a5e63; }
.cx { width: 18px; height: 18px; }
.one { margin-left: 28px; width: 468px; }
.one span { width: 338px; margin: 0 26px 0 15px; letter-spacing: .2px; }
.two { width: 471px; height: 69px; margin-top: 12px; padding: 0 0 12px 15px; background: #fafafa; border-radius: 20px 20px 0 0; }
.two span { width: 342px; margin: 0 23px 0 16px; letter-spacing: .1px; }
.two::before, .two::after { content: ""; position: absolute; width: 22px; height: 22px; bottom: 0; }
.two::before { left: -22px; background: radial-gradient(circle at 0 0, transparent 21.5px, #fafafa 22px); }
.two::after { right: -22px; background: radial-gradient(circle at 100% 0, transparent 21.5px, #fafafa 22px); }
.cplus { width: 20px; height: 20px; margin-left: 31px; }
.wins { display: flex; gap: 33px; margin: 0 21px 0 auto; }
.wins div { width: 48px; height: 48px; border-radius: 50%; background: #dadada; display: flex; align-items: center; justify-content: center; }
.wins svg { width: 16px; height: 16px; }
.cbar { height: 97px; flex: none; background: #fafafa; border-bottom: 3px solid #d2d2d2; border-radius: 14px 14px 0 0; display: flex; align-items: center; font-size: 28px; white-space: nowrap; }
.cnav { width: 37px; height: 37px; margin-left: 26px; margin-right: 10px; color: #3c3c3c; }
.cnav.off { color: #a8a8a8; }
.cbox { margin-left: 26px; width: 1257px; height: 70px; border-radius: 35px; background: #fff; display: flex; align-items: center; padding: 0 0 1px 9px; }
.chip { width: 227px; height: 50px; border-radius: 25px; background: #fafafa; color: #ca3a2c; font-weight: 600; display: flex; align-items: center; padding-left: 16px; gap: 13px; letter-spacing: .6px; }
.chip svg { width: 24px; height: 24px; }
.curl { margin-left: 17px; width: 936px; }
.curl s { color: #ca3a2c; letter-spacing: .28px; text-decoration-thickness: 3px; }
.curl em { font-style: normal; color: #777; letter-spacing: -.3px; }
.curl .path { letter-spacing: -.1px; }
.curl b { font-weight: 400; color: #161616; letter-spacing: -.48px; }
.cstar { width: 38px; height: 38px; }
.cpanel { width: 31px; height: 30px; margin-left: 37px; }
.cuser { width: 41px; height: 41px; border-radius: 50%; background: #d6e2fa; margin-left: 37px; }
.update { margin-left: 24px; width: 278px; height: 70px; border-radius: 35px; background: #ebebeb; display: flex; align-items: center; padding: 0 0 1px 30px; gap: 20px; font-weight: 500; letter-spacing: .95px; color: #505050; }
.update svg { width: 6px; height: 30px; color: #3c3c3c; }
.page { flex: 1; background: #fff; font: 32.300px/36px "Liberation Serif", serif; color: #111; padding: 14px 16px; white-space: nowrap; letter-spacing: .08px; }

.dialog { position: absolute; left: 428px; top: 168px; width: 1107px; height: 1238px; background: #fbfbfb; box-shadow: 0 0 0 2px #e0e0e0, 0 5px 8px 2px rgba(90, 98, 100, .35); }
.dhead { display: flex; justify-content: space-between; align-items: center; height: 119px; padding: 11px 48px 0 41px; }
.dhead svg { width: 21px; height: 21px; color: #444; }
h2 { margin: 0; font-size: 37px; font-weight: 600; letter-spacing: .32px; color: #474747; }
.dtabs { height: 46px; display: flex; border-bottom: 2px solid #c8c8c8; padding-left: 19px; font-size: 24px; line-height: 46px; color: #777; }
.dtabs .on { width: 134px; height: 46px; border: 2px solid #c8c8c8; border-bottom: 0; background: #fbfbfb; padding-left: 20px; margin-right: 22px; font-weight: 700; color: #161616; letter-spacing: -.5px; line-height: 42px; }
.dbody { padding: 58.500px 0 0 41px; font-size: 24px; line-height: 36.600px; color: #696969; }
h3 { margin: 0; font-size: 24px; font-weight: 400; line-height: 36px; letter-spacing: -.1px; color: #161616; }
dl { margin: 26.500px 0 59.700px 41px; display: grid; grid-template-columns: 313px 1fr; letter-spacing: -.17px; }
dd { margin: 0; white-space: nowrap; }
.date { letter-spacing: -.22px; }
.sha { line-height: 24.500px; margin-top: 64px; letter-spacing: .04px; }
dl:has(+ .sha) { margin-bottom: 0; }
.hash { grid-template-columns: 226px 1fr; margin-top: 33px; letter-spacing: .05px; }
```
